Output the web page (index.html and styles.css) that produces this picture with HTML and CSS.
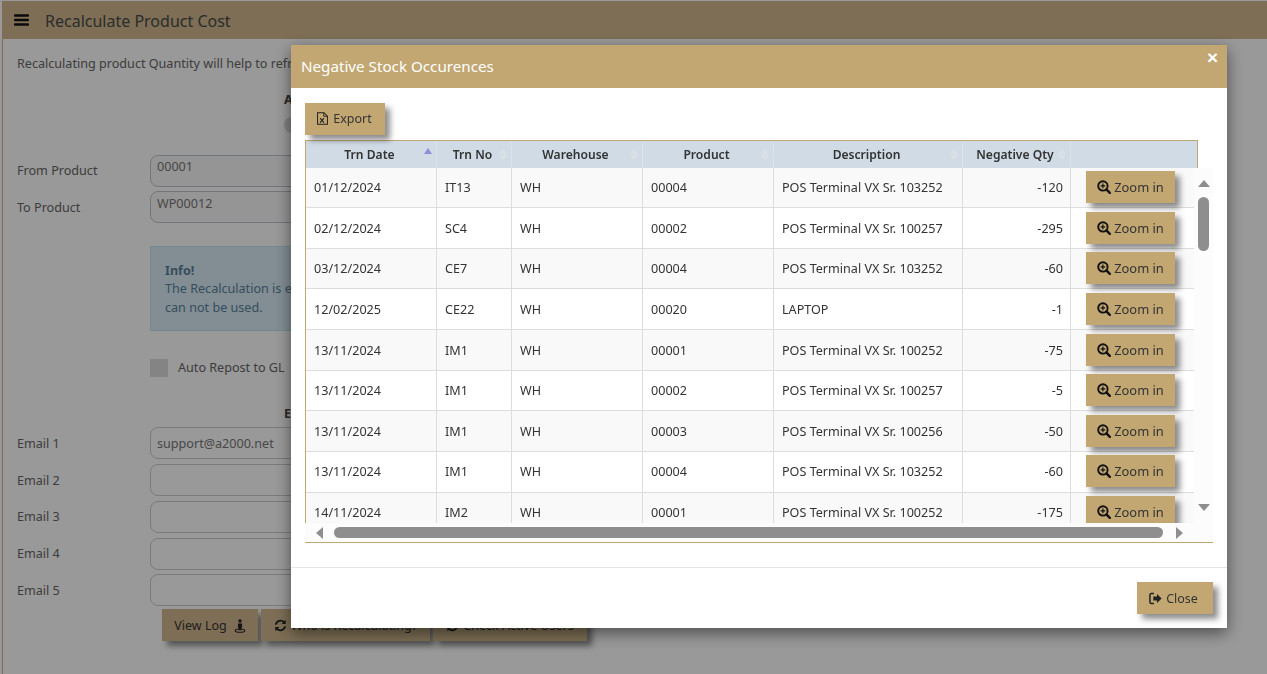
FILE: index.html
```html
<!DOCTYPE html>
<html lang="en">
<head>
<meta charset="utf-8">
<title>Recalculate Product Cost</title>
<link rel="stylesheet" href="styles.css">
</head>
<body>
<svg class="defs" width="0" height="0" aria-hidden="true">
  <symbol id="i-zoom" viewBox="0 0 14 14"><circle cx="5.9" cy="5.9" r="4.7" fill="none" stroke="currentColor" stroke-width="1.9"/><path d="M9.4 9.4l3.4 3.4" stroke="currentColor" stroke-width="2.4" stroke-linecap="round"/><path d="M3.6 5.9h4.6M5.9 3.6v4.6" stroke="currentColor" stroke-width="1.2"/></symbol>
</svg>
<div class="page">
  <header class="bar">
    <svg class="burger" viewBox="0 0 15 12"><path d="M1 1.4h13M1 6h13M1 10.6h13" stroke="currentColor" stroke-width="2.5" stroke-linecap="round"/></svg>
    <h1 class="bar-title">Recalculate Product Cost</h1>
  </header>
  <main class="content">
    <p class="intro">Recalculating product Quantity will help to refresh the stock balances of the selected product range.</p>
    <h2 class="section-head">Actual Cost</h2>
    <div class="pill"></div>
    <div class="field"><label class="field-label">From Product</label><input class="input input-top" value="00001"></div>
    <div class="field"><label class="field-label">To Product</label><input class="input input-top" value="WP00012"></div>
    <div class="alert"><strong>Info!</strong><br>The Recalculation is executed in the background, during which the system<br>can not be used.</div>
    <div class="check-row"><span class="check"></span><span>Auto Repost to GL</span></div>
    <h2 class="section-head email-head">Email Notification</h2>
    <div class="field"><label class="field-label">Email 1</label><input class="input" value="support@a2000.net"></div>
    <div class="field"><label class="field-label">Email 2</label><input class="input"></div>
    <div class="field"><label class="field-label">Email 3</label><input class="input"></div>
    <div class="field"><label class="field-label">Email 4</label><input class="input"></div>
    <div class="field"><label class="field-label">Email 5</label><input class="input"></div>
    <div class="actions">
      <button class="btn btn-log">View Log
        <svg class="ic-log" viewBox="0 0 14 16"><circle cx="7" cy="2.2" r="2" fill="currentColor"/><path d="M4.6 5h4.8v5H8.5v3h-3v-3H4.6z" fill="currentColor"/><ellipse cx="7" cy="13.4" rx="5.6" ry="1.9" fill="none" stroke="currentColor" stroke-width="1.2"/></svg>
      </button>
      <button class="btn btn-who"><svg class="ic" viewBox="0 0 14 14"><path d="M2 6a5.2 5.2 0 0 1 9-2.4M12 8a5.2 5.2 0 0 1-9 2.4" fill="none" stroke="currentColor" stroke-width="2"/><path d="M12.6.9v4.4H8.2zM1.4 13.1V8.7h4.4z" fill="currentColor"/></svg> Who is Recalculating?</button>
      <button class="btn btn-active"><svg class="ic" viewBox="0 0 14 14"><path d="M2 6a5.2 5.2 0 0 1 9-2.4M12 8a5.2 5.2 0 0 1-9 2.4" fill="none" stroke="currentColor" stroke-width="2"/><path d="M12.6.9v4.4H8.2zM1.4 13.1V8.7h4.4z" fill="currentColor"/></svg> Check Active Users</button>
    </div>
  </main>
</div>

<div class="overlay">
  <section class="modal">
    <header class="modal-head">
      <h3 class="modal-title">Negative Stock Occurences</h3>
      <span class="modal-x">×</span>
    </header>
    <div class="modal-body">
      <button class="btn btn-export"><svg class="ic ic-doc" viewBox="0 0 12 14"><path d="M.6.6h7l3.8 3.8v9H.6z" fill="none" stroke="currentColor" stroke-width="1.1"/><path d="M7.4.8v3.8h3.8" fill="none" stroke="currentColor" stroke-width="1"/><path d="M3.4 6.6l4.2 5M7.6 6.6l-4.2 5" stroke="currentColor" stroke-width="1.2"/></svg> Export</button>
      <div class="grid">
        <table class="head-table">
          <colgroup><col class="c1"><col class="c2"><col class="c3"><col class="c4"><col class="c5"><col class="c6"><col></colgroup>
          <thead>
            <tr>
              <th class="sort-asc">Trn Date</th><th class="sort">Trn No</th><th class="sort">Warehouse</th><th class="sort">Product</th><th class="sort">Description</th><th class="sort">Negative Qty</th><th></th>
            </tr>
          </thead>
        </table>
        <div class="grid-mid">
          <div class="grid-clip">
            <table class="body-table">
              <colgroup><col class="c1"><col class="c2"><col class="c3"><col class="c4"><col class="c5"><col class="c6"><col></colgroup>
              <tbody>
                <tr><td>01/12/2024</td><td>IT13</td><td>WH</td><td>00004</td><td>POS Terminal VX Sr. 103252</td><td class="num">-120</td><td class="act"><button class="btn btn-zoom"><svg class="ic-zoom"><use href="#i-zoom"/></svg> Zoom in</button></td></tr>
                <tr><td>02/12/2024</td><td>SC4</td><td>WH</td><td>00002</td><td>POS Terminal VX Sr. 100257</td><td class="num">-295</td><td class="act"><button class="btn btn-zoom"><svg class="ic-zoom"><use href="#i-zoom"/></svg> Zoom in</button></td></tr>
                <tr><td>03/12/2024</td><td>CE7</td><td>WH</td><td>00004</td><td>POS Terminal VX Sr. 103252</td><td class="num">-60</td><td class="act"><button class="btn btn-zoom"><svg class="ic-zoom"><use href="#i-zoom"/></svg> Zoom in</button></td></tr>
                <tr><td>12/02/2025</td><td>CE22</td><td>WH</td><td>00020</td><td>LAPTOP</td><td class="num">-1</td><td class="act"><button class="btn btn-zoom"><svg class="ic-zoom"><use href="#i-zoom"/></svg> Zoom in</button></td></tr>
                <tr><td>13/11/2024</td><td>IM1</td><td>WH</td><td>00001</td><td>POS Terminal VX Sr. 100252</td><td class="num">-75</td><td class="act"><button class="btn btn-zoom"><svg class="ic-zoom"><use href="#i-zoom"/></svg> Zoom in</button></td></tr>
                <tr><td>13/11/2024</td><td>IM1</td><td>WH</td><td>00002</td><td>POS Terminal VX Sr. 100257</td><td class="num">-5</td><td class="act"><button class="btn btn-zoom"><svg class="ic-zoom"><use href="#i-zoom"/></svg> Zoom in</button></td></tr>
                <tr><td>13/11/2024</td><td>IM1</td><td>WH</td><td>00003</td><td>POS Terminal VX Sr. 100256</td><td class="num">-50</td><td class="act"><button class="btn btn-zoom"><svg class="ic-zoom"><use href="#i-zoom"/></svg> Zoom in</button></td></tr>
                <tr><td>13/11/2024</td><td>IM1</td><td>WH</td><td>00004</td><td>POS Terminal VX Sr. 103252</td><td class="num">-60</td><td class="act"><button class="btn btn-zoom"><svg class="ic-zoom"><use href="#i-zoom"/></svg> Zoom in</button></td></tr>
                <tr><td>14/11/2024</td><td>IM2</td><td>WH</td><td>00001</td><td>POS Terminal VX Sr. 100252</td><td class="num">-175</td><td class="act"><button class="btn btn-zoom"><svg class="ic-zoom"><use href="#i-zoom"/></svg> Zoom in</button></td></tr>
              </tbody>
            </table>
          </div>
          <div class="vbar">
            <span class="arrow-up"></span>
            <span class="vthumb"></span>
            <span class="vfill"></span>
            <span class="arrow-down"></span>
          </div>
        </div>
        <div class="hbar">
          <span class="arrow-left"></span>
          <span class="hthumb"></span>
          <span class="arrow-right"></span>
        </div>
      </div>
    </div>
    <footer class="modal-foot">
      <button class="btn btn-close"><svg class="ic ic-out" viewBox="0 0 14 13"><path d="M5.4 1.2H2.6A1.6 1.6 0 0 0 1 2.8v7.4a1.6 1.6 0 0 0 1.6 1.6h2.8" fill="none" stroke="currentColor" stroke-width="1.6"/><path d="M4.6 4.4h4V1.6l5 4.9-5 4.9V8.6h-4z" fill="currentColor"/></svg> Close</button>
    </footer>
  </section>
</div>
</body>
</html>
```

FILE: styles.css
```css
* { box-sizing: border-box; }
html, body { margin: 0; height: 674px; overflow: hidden; }
body {
  background: #fff;
  color: #666;
  font-family: "Noto Sans", "Open Sans", sans-serif;
  font-size: 12.6px;
  line-height: 18px;
}
.defs { display: block; height: 0; }

.page { padding: 1px 0 0 2px; height: 674px; overflow: hidden; }
.bar {
  display: flex;
  align-items: center;
  height: 38px;
  background: #d0b88e;
  padding-left: 12px;
}
.burger { width: 15px; height: 12px; color: #111; }
.bar-title { margin: 2px 0 0 16px; font-size: 16px; font-weight: 400; color: #4a4a4a; }
.content { border-left: 1px solid #d0b88e; padding: 16px 0 0 14px; width: 900px; height: 640px; }
.intro { margin: 0; white-space: nowrap; }
.section-head { margin: 18px 0 0 267px; font-size: 12.6px; font-weight: 700; white-space: nowrap; color: #444; }
.pill { width: 60px; height: 16px; margin: 8px 0 21.5px 267px; border-radius: 8px; background: #d8d8d8; }
.field { display: flex; align-items: center; height: 32px; margin-bottom: 4.7px; }
.field-label { width: 133px; padding-top: 1px; }
.input {
  width: 620px;
  height: 32px;
  border: 1px solid #ccc;
  border-radius: 8px;
  padding: 0 6px;
  background: #fff;
  color: #777;
  font: inherit;
}
.input-top { background: #f8f8f8; border-color: #bfc4cc; padding-bottom: 8px; }
.alert {
  width: 620px;
  height: 85px;
  margin: 22.5px 0 0 133px;
  padding: 15.3px 14px 0;
  background: #d9edf7;
  border: 1px solid #bce8f1;
  color: #5a8299;
  line-height: 18.5px;
}
.check-row { display: flex; align-items: center; gap: 10px; margin: 28px 0 0 133px; height: 18px; }
.check { width: 18px; height: 18px; background: #ddd; }
.email-head { margin-top: 28px; }
.email-head + .field { margin-top: 4.8px; }
.actions { display: flex; gap: 3px; margin: -1.8px 0 0 145px; }

.btn {
  display: inline-flex;
  align-items: center;
  justify-content: center;
  gap: 4px;
  height: 32px;
  padding: 0;
  border: 0;
  background: #c2a772;
  color: #333;
  font: inherit;
  font-size: 12.5px;
  white-space: nowrap;
  box-shadow: 5px 5px 6px rgba(0, 0, 0, .45);
}
.actions .btn { background: #d0b88e; padding-top: 1px; }
.btn-log { width: 96px; gap: 7px; }
.btn-who { width: 169px; }
.btn-active { width: 154px; }
.ic { width: 13px; height: 13px; color: #222; flex: none; }
.ic-log { width: 12px; height: 14px; color: #222; }

.overlay {
  position: fixed;
  inset: 0;
  background: rgba(0, 0, 0, .4);
  padding: 45px 0 0 291px;
}
.modal {
  width: 936px;
  background: #fff;
  box-shadow: 0 5px 15px rgba(0, 0, 0, .5);
}
.modal-head {
  display: flex;
  justify-content: space-between;
  height: 43px;
  padding: 0 9px 0 10px;
  background: #c2a772;
  color: #fff;
}
.modal-title { margin: 0; font-size: 15.2px; font-weight: 400; line-height: 43px; }
.modal-x { font-family: "Liberation Sans", sans-serif; font-size: 19px; font-weight: 700; line-height: 26px; }
.modal-body { height: 479px; padding: 15px 14px 0; }
.btn-export { width: 80px; padding: 0 1px 1px 0; gap: 5px; }
.btn-export .ic { width: 11px; height: 13px; }
.grid { width: 908px; margin-top: 5px; border-bottom: 1px solid #c2a772; }
.head-table, .body-table { border-collapse: separate; border-spacing: 0; table-layout: fixed; }
.head-table {
  width: 893px;
  height: 28px;
  background: #d0dbe5;
  border: 1px solid #c2a772;
  border-bottom: 0;
  color: #333;
  font-size: 12.1px;
}
.c1 { width: 131px; }
.c2 { width: 75px; }
.c3, .c4 { width: 131px; }
.c5 { width: 189px; }
.c6 { width: 108px; }
.head-table th {
  position: relative;
  padding: 0 11px 0 8px;
  font-weight: 600;
  text-align: center;
  border-right: 1px solid #dbe3ea;
  white-space: nowrap;
}
.head-table th:last-child { border-right: 0; }
.sort::before, .sort::after, .sort-asc::before {
  content: "";
  position: absolute;
  right: 4px;
  border-left: 4.5px solid transparent;
  border-right: 4.5px solid transparent;
}
.sort::before { top: 7px; border-bottom: 6px solid #d9e0e6; }
.sort::after { top: 14px; border-top: 6px solid #d9e0e6; }
.sort-asc::before { top: 7px; border-bottom: 6px solid #8c8fd8; }

.grid-mid { display: flex; height: 355px; }
.grid-clip { width: 889px; overflow: hidden; border-left: 1px solid #c2a772; flex: none; }
.body-table { width: 892px; margin-top: -0.4px; }
.body-table td {
  height: 40.625px;
  padding: 1.4px 8px 0;
  border-right: 1px solid #ddd;
  border-bottom: 1px solid #ddd;
  white-space: nowrap;
  color: #333;
  overflow: hidden;
}
.body-table tr:nth-child(odd) td { background: #f9f9f9; }
.body-table td.num { text-align: right; padding-right: 7px; }
.body-table td.act { padding: 0 0 0 15px; border-right: 0; vertical-align: top; overflow: visible; }
.btn-zoom { width: 89px; margin-top: 3.4px; gap: 3px; font-size: 12.9px; }
.ic-zoom { width: 14px; height: 14px; color: #111; flex: none; }

.vbar {
  flex: none;
  width: 19px;
  display: flex;
  flex-direction: column;
  align-items: center;
  background: #fcfcfc;
  padding: 12px 0 12px;
}
.arrow-up, .arrow-down {
  width: 0; height: 0; flex: none;
  border-left: 6.5px solid transparent;
  border-right: 6.5px solid transparent;
}
.arrow-up { border-bottom: 7px solid #8e8e8e; }
.arrow-down { border-top: 7px solid #8e8e8e; }
.vthumb { width: 11px; height: 54px; margin-top: 10px; border-radius: 6px; background: #8e8e8e; flex: none; }
.vfill { flex: 1; }
.hbar {
  display: flex;
  align-items: center;
  height: 19px;
  padding: 0 30px 0 11px;
  background: #fcfcfc;
}
.arrow-left, .arrow-right {
  width: 0; height: 0; flex: none;
  border-top: 6.5px solid transparent;
  border-bottom: 6.5px solid transparent;
}
.arrow-left { border-right: 7px solid #8e8e8e; }
.arrow-right { border-left: 7px solid #8e8e8e; }
.hthumb { width: 829px; height: 11px; margin: 0 13px 0 11px; border-radius: 6px; background: #8e8e8e; flex: none; }

.modal-foot {
  display: flex;
  justify-content: flex-end;
  height: 61px;
  padding: 14px 14px 15px;
  border-top: 1px solid #e5e5e5;
}
.btn-close { width: 76px; padding: 1px 3px 0 0; }
```
